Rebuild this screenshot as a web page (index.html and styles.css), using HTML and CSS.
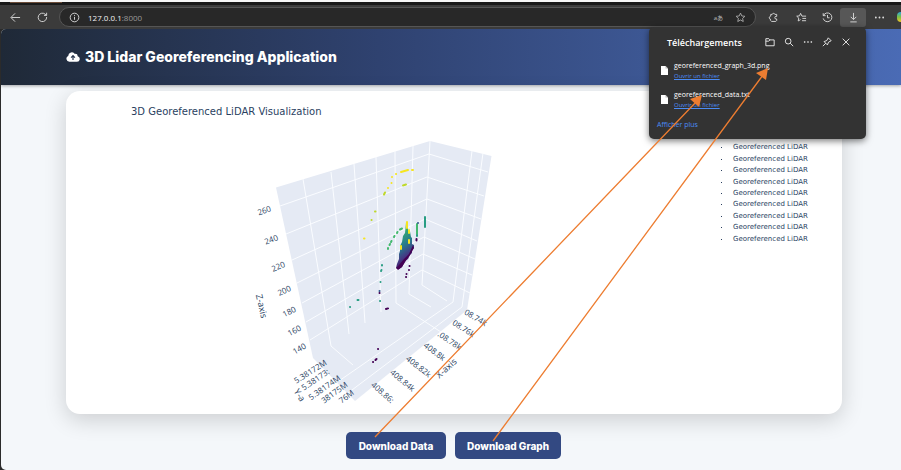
FILE: index.html
```html
<!DOCTYPE html>
<html lang="en">
<head>
<meta charset="utf-8">
<title>3D Lidar Georeferencing Application</title>
<link rel="stylesheet" href="styles.css">
</head>
<body>
<div class="window">
  <div class="tabstrip"><span class="tab-accent"></span></div>
  <div class="toolbar">
    <button class="tool" aria-label="Back"><svg class="icon" viewBox="0 0 12 12"><path d="M11 6H1.500M5.500 1.500L1 6l4.500 4.500"/></svg></button>
    <button class="tool" aria-label="Refresh"><svg class="icon" viewBox="0 0 12 12"><path d="M10.500 5.500A4.600 4.600 0 1 1 8.800 2.300L10.300 3.500M10.500 .8v2.900H7.600"/></svg></button>
    <div class="address">
      <svg class="icon" viewBox="0 0 12 12"><circle cx="6" cy="6" r="4.700"/><path d="M6 5.300v3.200M6 3.200v1"/></svg>
      <span class="url">127.0.0.1<span class="port">:8000</span></span>
      <span class="translate">aあ</span>
      <button class="tool" aria-label="Favourite"><svg class="icon" viewBox="0 0 12 12"><path d="M6 1.200l1.400 3.100 3.400.4-2.500 2.300.7 3.400-3-1.700-3 1.700.7-3.400L1.200 4.700l3.400-.4z"/></svg></button>
    </div>
    <div class="tools">
      <button class="tool" aria-label="Extensions"><svg class="icon" viewBox="0 0 12 12"><path d="M3 2.600h1.600a1.500 1.500 0 0 1 2.900 0H9.500V4.800H8.800a1.400 1.400 0 0 0 0 2.800h.7v1.600L8.500 10.300H4L2.600 9V7.700a1.500 1.500 0 0 1-.2-2.900L3 4.600z"/></svg></button>
      <span class="divider"></span>
      <button class="tool" aria-label="Favourites"><svg class="icon" viewBox="0 0 12 12"><path d="M6.500 4.500L5 1.500 3.800 4.200.8 4.600l2.200 2-.6 3.200L5 8.300M6.500 4.500H11M7 7h4M6.500 9.500H11"/></svg></button>
      <button class="tool" aria-label="History"><svg class="icon" viewBox="0 0 12 12"><path d="M1.500 4A4.800 4.800 0 1 1 1.300 7M1.300 1.300V4H4M6 3.200v3.100h2.300"/></svg></button>
      <button class="tool active" aria-label="Downloads"><svg class="icon" viewBox="0 0 12 12"><path d="M6 1v7M3 5.300l3 3 3-3M2.500 10.800h7"/></svg></button>
      <button class="tool" aria-label="More"><svg class="icon dots" viewBox="0 0 12 12"><circle cx="2" cy="6" r="1"/><circle cx="6" cy="6" r="1"/><circle cx="10" cy="6" r="1"/></svg></button>
      <span class="copilot"></span>
    </div>
  </div>

  <div class="page">
    <header class="app-header">
      <svg class="cloud" viewBox="0 0 14 10"><path d="M3.300 9.800A3.100 3.100 0 0 1 2.200 3.900 3.700 3.700 0 0 1 8.900 1.900 2.500 2.500 0 0 1 11.700 4.300a2.800 2.800 0 0 1-.8 5.500z" fill="#fff"/><path d="M7 8V4M5.100 5.600L7 3.700l1.900 1.900" fill="none" stroke="#2a3850" stroke-width="1.200"/></svg>
      <h1>3D Lidar Georeferencing Application</h1>
    </header>

    <main>
      <section class="card">
        <h2>3D Georeferenced LiDAR Visualization</h2>
        <div class="chart">
          <svg class="plot" viewBox="240 124 270 280" role="img" aria-label="3D scatter plot">
            <path fill="#e5eaf4" d="M276 187.500L430 141l61.500 15L467 310l-112 91-42-43z"/>
            <g class="grid">
              <path d="M303 179l28 167 22 19M331 172l18 162M354 164l11 159M376 157l5 155M395 151l1 152 45 29M413 146l-4 148 22 13M430 141l-8 144 25 16"/>
              <path d="M280 206l149-52 59 18M286 234l141-57 57 19M292 260l135-61 54 20M297 283l128-64 52 22M302 303l122-66 51 22M306 322l117-68 49 21M310 340l112-70 48 23"/>
              <path d="M472 151l-19 151-117 81M483 153l-21 154-114 86"/>
            </g>
            <g class="ticks">
              <text transform="translate(264 210) rotate(-19)">260</text>
              <text transform="translate(271 239) rotate(-21)">240</text>
              <text transform="translate(278 266) rotate(-23)">220</text>
              <text transform="translate(284 290) rotate(-24)">200</text>
              <text transform="translate(289 311) rotate(-26)">180</text>
              <text transform="translate(294 330) rotate(-28)">160</text>
              <text transform="translate(299 348) rotate(-29)">140</text>
              <text transform="translate(310 371) rotate(-32)">5.38172M</text>
              <text transform="translate(315 379) rotate(-34)">5.38173:</text>
              <text transform="translate(324 387) rotate(-35)">5.38174M</text>
              <text transform="translate(334 392) rotate(-36)">38175M</text>
              <text transform="translate(346 396) rotate(-36)">76M</text>
              <text transform="translate(476 317) rotate(31)">08.74k</text>
              <text transform="translate(464 328) rotate(33)">08.76k</text>
              <text transform="translate(450 340) rotate(34)">.08.78k</text>
              <text transform="translate(435 351) rotate(37)">408.8k</text>
              <text transform="translate(419 366) rotate(38)">408.82k</text>
              <text transform="translate(403 380) rotate(40)">408.84k</text>
              <text transform="translate(383 392) rotate(41)">408.86:</text>
              <text class="axis" transform="translate(262 306) rotate(77)">Z-axis</text>
              <text class="axis" transform="translate(446 368) rotate(-42)">X-axis</text>
              <text class="axis" transform="translate(300 395) rotate(58)">Y-a</text>
            </g>
            <defs>
              <linearGradient id="depth" x1=".3" y1="0" x2=".6" y2="1">
                <stop offset="0" stop-color="#b4d72f"/><stop offset=".25" stop-color="#32a37a"/>
                <stop offset=".5" stop-color="#27788d"/><stop offset=".72" stop-color="#443984"/><stop offset="1" stop-color="#440154"/>
              </linearGradient>
            </defs>
            <path fill="url(#depth)" d="M406 222l2 1v7l2 1 1 6 1 1v6l2 1v3l-2 2v3l-2 2-2 4-3 2-3 6-3 2-3-1 1-4 2-5v-5l1-3v-5l2-4 1-6 2-3z"/>
            <path fill="#440154" d="M413 245l1 3-4 7-3 4-5 8-4 3-2-2 3-3 5-6 5-5z"/>
            <g class="points">
              <path stroke="#f6e51f" d="M407 222v6M409 230v3M401 246v3M409 240v3M401 172l7-2M412 170h1M396 174h.1M392 177v.1M391.500 183v.1M388 188v.1M364 238.500h.5"/>
              <path stroke="#bfd92a" d="M403 185.500l3-1M384 194.500l1-2M375 211.500h.5M371.500 220h.1"/>
              <path stroke="#43b96e" d="M388 249v-1M389.500 245l.5-1M391 242l.5-1M394 237l.5-1M397 233l.5-1M400 229.500l2-1M417 224v10"/>
              <path stroke="#289d83" d="M425 217v10M382 265v.5M381.500 270v.1M381 271h.1M417 235v1M380.500 282v.1M380 301h.1M350 307h.1M357.500 300h1"/>
              <path stroke="#31578b" d="M418 223v.1M379.500 291h.1"/>
              <path stroke="#440154" d="M416.500 239v1.500M409.500 266h.1M409 270v.1M406.500 274v.1M406 277h.1M379.500 293h.1M386 309l2-.6M378 349h.1M373 362h.1M375.500 360l1-1"/>
            </g>
          </svg>
        </div>
        <ul class="legend">
          <li>Georeferenced LiDAR</li><li>Georeferenced LiDAR</li><li>Georeferenced LiDAR</li>
          <li>Georeferenced LiDAR</li><li>Georeferenced LiDAR</li><li>Georeferenced LiDAR</li>
          <li>Georeferenced LiDAR</li><li>Georeferenced LiDAR</li><li>Georeferenced LiDAR</li>
        </ul>
      </section>
      <div class="actions">
        <button class="primary">Download Data</button>
        <button class="primary">Download Graph</button>
      </div>
    </main>
  </div>

  <aside class="downloads">
    <div class="downloads-head">
      <h3>Téléchargements</h3>
      <button class="tool" aria-label="Open folder"><svg class="icon" viewBox="0 0 12 12"><path d="M1 2h3.500L6 3.500h5v7H1zM1 5h3.500L6 3.500"/></svg></button>
      <button class="tool" aria-label="Search"><svg class="icon" viewBox="0 0 12 12"><circle cx="5" cy="5" r="3.400"/><path d="M7.500 7.500L11 11"/></svg></button>
      <button class="tool" aria-label="Options"><svg class="icon dots" viewBox="0 0 12 12"><circle cx="2" cy="6" r="1"/><circle cx="6" cy="6" r="1"/><circle cx="10" cy="6" r="1"/></svg></button>
      <button class="tool" aria-label="Pin"><svg class="icon" viewBox="0 0 12 12"><path d="M7.500 1l3.500 3.500-3.200 1.700L6.500 9.500 2.500 5.500l3.300-1.300zM4.500 7.500L1 11"/></svg></button>
      <button class="tool" aria-label="Close"><svg class="icon" viewBox="0 0 12 12"><path d="M2 2l8 8M10 2l-8 8"/></svg></button>
    </div>
    <div class="file">
      <svg class="doc" viewBox="0 0 7 9"><path d="M0 0h4.500L7 2.500V9H0z" fill="#fff"/><path d="M4.500 0v2.500H7" fill="#bbb"/></svg>
      <div><p>georeferenced_graph_3d.png</p><a href="#">Ouvrir un fichier</a></div>
    </div>
    <div class="file">
      <svg class="doc" viewBox="0 0 7 9"><path d="M0 0h4.500L7 2.500V9H0z" fill="#fff"/><path d="M4.500 0v2.500H7" fill="#bbb"/></svg>
      <div><p>georeferenced_data.txt</p><a href="#">Ouvrir un fichier</a></div>
    </div>
    <a class="more" href="#">Afficher plus</a>
  </aside>

  <svg class="arrows" viewBox="0 0 901 470" aria-hidden="true">
    <path d="M375 437L697 101M493 441L763 75" fill="none" stroke="#ed7d31" stroke-width="1.300"/>
    <path d="M702 95l-3 12-9-8zM768 68l-2 12-10-7z" fill="#ed7d31"/>
  </svg>
</div>
</body>
</html>
```
FILE: styles.css
```css
* { box-sizing: border-box; }
body { margin: 0; font-family: "Open Sans", sans-serif; background: #f4f7fa; }
h1, h2, h3, p, ul { margin: 0; padding: 0; }
button { font: inherit; border: 0; padding: 0; background: none; color: inherit; }

.window { position: relative; min-height: 100vh; display: flex; flex-direction: column; background: #2b2b2b; }
.tabstrip { height: 5px; border-top: 2px solid #f6f6f6; background: #191919; }
.tab-accent { display: block; width: 52px; height: 1px; margin-left: 10px; background: #6b4c38; }
.toolbar { display: flex; align-items: center; height: 24px; padding-left: 9px; background: #3b3b3b; color: #dcdcdc; }
.tool { display: flex; align-items: center; justify-content: center; width: 27px; height: 19px; flex: none; }
.toolbar > .tool { width: 12px; margin-right: 15px; }
.icon { width: 11px; height: 11px; fill: none; stroke: currentColor; stroke-width: 1; flex: none; }
.icon.dots { fill: currentColor; stroke: none; }
.address { flex: 1; display: flex; align-items: center; height: 20px; margin-left: -4px; padding-left: 9px; border: 1px solid #555; border-radius: 10px; background: #282828; }
.url { flex: 1; margin-left: 8px; font-size: 8px; color: #f2f2f2; }
.port { color: #9a9a9a; }
.translate { font: 6px "Open Sans", "Noto Sans CJK JP", sans-serif; color: #bbb; }
.address .tool { width: 35px; height: 18px; margin-right: -3px; color: #aaa; }
.tools { display: flex; align-items: center; width: 145px; padding-left: 3px; }
.tools .tool { width: 26px; }
.tools .tool:first-child { width: 29px; }
.divider { width: 1px; height: 11px; background: #5a5a5a; }
.tools .active { border-radius: 3px; background: #575757; }
.copilot { width: 6px; height: 10px; margin-left: 5px; border-radius: 4px 0 0 4px; background: linear-gradient(#2aa8e0, #7cc142 50%, #f2c32c); flex: none; }

.page { flex: 1; margin-left: 1px; border-radius: 5px 0 0 5px; overflow: hidden; background: #f4f7fa; }
.app-header { display: flex; align-items: center; gap: 5px; height: 56px; padding-left: 65px; background: linear-gradient(90deg, #1f2937, #2f4270 42%, #4a6bb5); box-shadow: 0 1px 3px #0005; }
.cloud { width: 14px; height: 10px; }
h1 { color: #fff; font: 800 14px/20px Inter, sans-serif; }

.card { margin: 6px 59px 0 65px; padding: 14px 31px 10px 65px; border-radius: 14px; background: #fff; box-shadow: 0 6px 22px #0000002a; display: grid; grid-template-columns: 1fr 90px; }
h2 { grid-column: 1 / 3; color: #2a3f5f; font: 400 10px/13px "DejaVu Sans", sans-serif; }
.chart { padding-left: 109px; height: 286px; }
.plot { display: block; width: 270px; height: 280px; margin-top: 6px; overflow: visible; }
.grid path { fill: none; stroke: #fafcff; stroke-width: 1; }
.ticks { fill: #2a3f5f; font: 8px "Open Sans", sans-serif; text-anchor: middle; dominant-baseline: central; }
.axis { font-size: 9px; }
.points path { fill: none; stroke-width: 2; stroke-linecap: round; }
.legend { display: grid; grid-auto-rows: 1fr; height: 103px; margin-top: 24px; list-style: none; color: #2a3f5f; font: 7px/11px "DejaVu Sans", sans-serif; }
.legend li { display: flex; align-items: center; gap: 11px; white-space: nowrap; }
.legend li::before { content: ""; width: 1px; height: 1px; background: #2a3f5f; }

.actions { display: flex; justify-content: center; gap: 9px; padding: 18px 0 11px 5px; }
.primary { min-width: 100px; height: 27px; padding: 0 12px; border-radius: 5px; background: #334982; color: #fff; font: 800 10px/16px Inter, sans-serif; }

.downloads { position: absolute; top: 27px; right: 35px; width: 217px; height: 112px; padding: 5px 8px; border-radius: 5px; background: #333; color: #fff; box-shadow: 0 2px 7px #0008; }
.downloads-head { display: flex; align-items: center; height: 20px; padding: 0 3px 0 10px; }
h3 { flex: 1; font-size: 9px; font-weight: 600; }
.downloads .tool { width: 19px; }
.downloads .icon { width: 10px; height: 10px; }
.file { display: flex; align-items: center; gap: 6px; height: 29px; padding: 8px 0 0 4px; }
.file p { font-size: 7px; line-height: 11px; }
.file a { display: block; font-size: 6px; line-height: 10px; }
.doc { width: 7px; height: 9px; }
.downloads a { color: #4b8cf5; }
.more { display: block; margin-top: 10px; font-size: 7px; line-height: 10px; text-decoration: none; }
.arrows { position: absolute; top: 0; left: 0; width: 901px; height: 470px; pointer-events: none; }
```
